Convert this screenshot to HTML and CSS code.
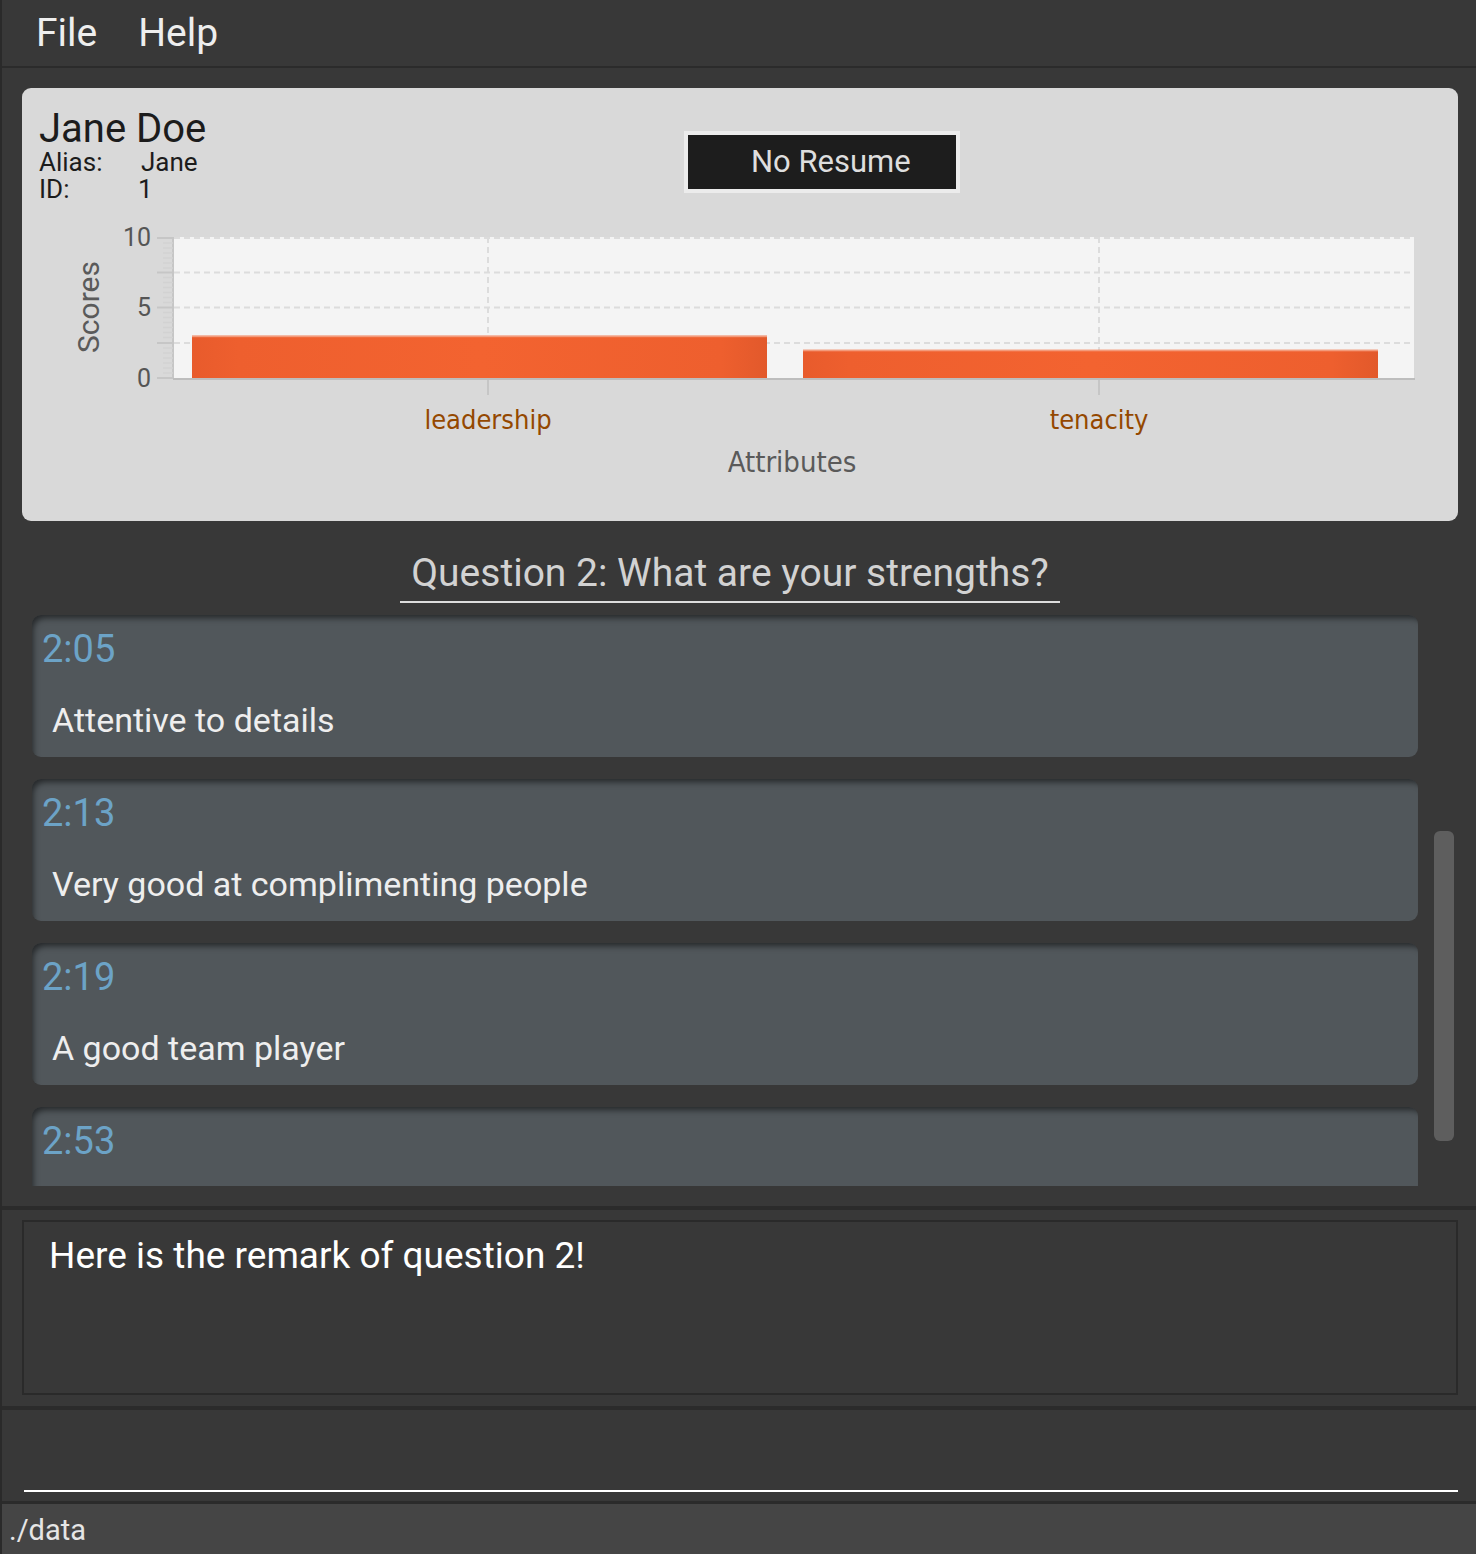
FILE: index.html
```html
<!DOCTYPE html>
<html>
<head>
<meta charset="utf-8">
<link rel="stylesheet" href="styles.css">
</head>
<body>
<div class="app">
  <div class="menubar"><span class="menu">File</span><span class="menu">Help</span></div>
  <div class="content">
    <section class="card">
      <div class="card-head">
        <div class="identity">
          <div class="name">Jane Doe</div>
          <div class="field"><span class="key">Alias:</span><span class="val">Jane</span></div>
          <div class="field"><span class="key">ID:</span><span class="val id">1</span></div>
        </div>
        <div class="resume">No Resume</div>
      </div>
      <svg class="chart" width="1436" height="311" viewBox="0 0 1436 311">
        <defs>
          <linearGradient id="bar" x1="0" x2="1" y1="0" y2="0">
            <stop offset="0" stop-color="#e85b2c"/>
            <stop offset="0.08" stop-color="#ee5f2e"/>
            <stop offset="0.5" stop-color="#f36330"/>
            <stop offset="0.92" stop-color="#ee5f2e"/>
            <stop offset="1" stop-color="#e2592b"/>
          </linearGradient>
        </defs>
        <rect x="152" y="27" width="1240" height="141" fill="#f4f4f4"/>
        <g stroke="#dcdcdc" stroke-width="2" stroke-dasharray="6 4" fill="none">
          <line x1="152" y1="28" x2="1392" y2="28"/>
          <line x1="152" y1="62.5" x2="1392" y2="62.5"/>
          <line x1="152" y1="97.5" x2="1392" y2="97.5"/>
          <line x1="152" y1="133" x2="1392" y2="133"/>
          <line x1="466" y1="27" x2="466" y2="168"/>
          <line x1="1077" y1="27" x2="1077" y2="168"/>
        </g>
        <rect x="170" y="125.7" width="575" height="42.3" fill="url(#bar)"/>
        <rect x="170" y="125.7" width="575" height="1.5" fill="#f39a7a"/>
        <rect x="781" y="139.8" width="575" height="28.2" fill="url(#bar)"/>
        <rect x="781" y="139.8" width="575" height="1.5" fill="#f39a7a"/>
        <g stroke="#c6c6c6" stroke-width="2" fill="none">
          <line x1="151" y1="27" x2="151" y2="169"/>
          <line x1="135" y1="28" x2="151" y2="28"/>
          <line x1="135" y1="62.5" x2="151" y2="62.5"/>
          <line x1="135" y1="97.5" x2="151" y2="97.5"/>
          <line x1="135" y1="133" x2="151" y2="133"/>
          <line x1="135" y1="168" x2="151" y2="168"/>
          <line x1="466" y1="169" x2="466" y2="185"/>
          <line x1="1077" y1="169" x2="1077" y2="185"/>
        </g>
        <g stroke="#d2d2d2" stroke-width="1.5" fill="none">
          <line x1="141" y1="33" x2="151" y2="33"/>
          <line x1="141" y1="38" x2="151" y2="38"/>
          <line x1="141" y1="43" x2="151" y2="43"/>
          <line x1="141" y1="48" x2="151" y2="48"/>
          <line x1="141" y1="53" x2="151" y2="53"/>
          <line x1="141" y1="58" x2="151" y2="58"/>
          <line x1="141" y1="67.5" x2="151" y2="67.5"/>
          <line x1="141" y1="72.5" x2="151" y2="72.5"/>
          <line x1="141" y1="77.5" x2="151" y2="77.5"/>
          <line x1="141" y1="82.5" x2="151" y2="82.5"/>
          <line x1="141" y1="87.5" x2="151" y2="87.5"/>
          <line x1="141" y1="92.5" x2="151" y2="92.5"/>
          <line x1="141" y1="102.5" x2="151" y2="102.5"/>
          <line x1="141" y1="107.5" x2="151" y2="107.5"/>
          <line x1="141" y1="112.5" x2="151" y2="112.5"/>
          <line x1="141" y1="117.5" x2="151" y2="117.5"/>
          <line x1="141" y1="122.5" x2="151" y2="122.5"/>
          <line x1="141" y1="127.5" x2="151" y2="127.5"/>
          <line x1="141" y1="138" x2="151" y2="138"/>
          <line x1="141" y1="143" x2="151" y2="143"/>
          <line x1="141" y1="148" x2="151" y2="148"/>
          <line x1="141" y1="153" x2="151" y2="153"/>
          <line x1="141" y1="158" x2="151" y2="158"/>
          <line x1="141" y1="163" x2="151" y2="163"/>
        </g>
        <line x1="151" y1="169" x2="1393" y2="169" stroke="#bdbdbd" stroke-width="2"/>
        <g class="tick-label" text-anchor="end">
          <text x="129" y="36">10</text>
          <text x="129" y="106">5</text>
          <text x="129" y="177">0</text>
        </g>
        <g class="cat-label" text-anchor="middle">
          <text x="466" y="219">leadership</text>
          <text x="1077" y="219">tenacity</text>
        </g>
        <text class="axis-title" x="770" y="262" text-anchor="middle">Attributes</text>
        <text class="axis-title scores" x="0" y="0" text-anchor="middle" transform="translate(77 97) rotate(-90)">Scores</text>
      </svg>
    </section>

    <div class="question"><span class="qtext">Question 2: What are your strengths?</span></div>

    <div class="list-wrap">
      <div class="list">
        <div class="item"><div class="time">2:05</div><div class="desc">Attentive to details</div></div>
        <div class="item"><div class="time">2:13</div><div class="desc">Very good at complimenting people</div></div>
        <div class="item"><div class="time">2:19</div><div class="desc">A good team player</div></div>
        <div class="item"><div class="time">2:53</div><div class="desc">&nbsp;</div></div>
      </div>
      <div class="scroll"><div class="thumb"></div></div>
    </div>
  </div>

  <div class="remark-pane"><div class="remark">Here is the remark of question 2!</div></div>
  <div class="command-pane"><div class="command-line"></div></div>
  <div class="status">./data</div>
</div>
</body>
</html>
```

FILE: styles.css
```css
* { box-sizing: border-box; }
html, body { margin: 0; padding: 0; }
body {
  background: #383838;
  font-family: Roboto, "Liberation Sans", sans-serif;
  width: 1476px;
  height: 1554px;
  overflow: hidden;
}
.app {
  width: 1476px;
  height: 1554px;
  border-left: 2px solid #2a2a2a;
  display: flex;
  flex-direction: column;
  background: #383838;
}
.menubar {
  height: 68px;
  border-bottom: 2px solid #2b2b2b;
  display: flex;
  padding-left: 34px;
  gap: 41px;
  line-height: 66px;
}
.menu {
  font-size: 39px;
  color: #eeeeee;
}
.content {
  padding: 20px 18px 20px 20px;
}
.card {
  height: 433px;
  background: #d9d9d9;
  border-radius: 9px;
  display: flex;
  flex-direction: column;
}
.card-head {
  height: 122px;
  display: flex;
  padding: 21px 0 0 17px;
}
.identity {
  width: 645px;
  color: #1c1c1c;
}
.name {
  font-size: 40px;
  line-height: 40px;
}
.field {
  display: flex;
  font-size: 26px;
  line-height: 27px;
}
.key { width: 102px; }
.val.id { margin-left: -3px; }
.resume {
  margin-top: 22px;
  width: 276px;
  height: 62px;
  border: 4px solid #ececec;
  background: #1d1d1d;
  color: #dedede;
  font-size: 31px;
  line-height: 54px;
  padding-left: 63px;
}
.chart { display: block; }
.tick-label text {
  font-family: Roboto, sans-serif;
  font-size: 25px;
  fill: #555555;
}
.cat-label text {
  font-family: "DejaVu Sans Condensed", "DejaVu Sans", sans-serif;
  font-size: 27px;
  fill: #944800;
}
.axis-title {
  font-family: "DejaVu Sans Condensed", "DejaVu Sans", sans-serif;
  font-size: 29px;
  fill: #5a5a5a;
}
.axis-title.scores {
  font-family: Roboto, sans-serif;
  font-size: 30px;
}
.question {
  display: flex;
  justify-content: center;
  padding-right: 20px;
  padding-top: 30px;
}
.qtext {
  font-size: 39px;
  line-height: 44px;
  color: #d2d2d2;
  padding: 0 11px 6px;
  border-bottom: 2px solid #dddddd;
}
.list-wrap {
  margin-top: 12px;
  height: 571px;
  display: flex;
  overflow: hidden;
}
.list {
  width: 1396px;
  padding-left: 10px;
  display: flex;
  flex-direction: column;
  gap: 22px;
}
.item {
  flex: 0 0 142px;
  background: #51575b;
  border-radius: 9px;
  box-shadow: inset 4px 6px 6px -3px rgba(0, 0, 0, 0.55);
  padding: 12px 0 0 10px;
}
.time {
  font-size: 38px;
  line-height: 44px;
  color: #6ca3c7;
}
.desc {
  margin-top: 29px;
  padding-left: 10px;
  font-size: 34px;
  line-height: 40px;
  color: #eeeeee;
}
.scroll {
  padding-left: 16px;
  padding-top: 216px;
}
.thumb {
  width: 20px;
  height: 310px;
  background: #5e5e5e;
  border-radius: 6px;
}
.remark-pane {
  border-top: 4px solid #2b2b2b;
  padding: 10px 18px 11px 20px;
}
.remark {
  height: 175px;
  border: 2px solid #2a2a2a;
  padding: 13px 0 0 25px;
  font-size: 37px;
  line-height: 42px;
  color: #ffffff;
}
.command-pane {
  border-top: 4px solid #2b2b2b;
  padding: 80px 18px 9px 22px;
}
.command-line {
  height: 2px;
  background: #ffffff;
}
.status {
  flex: 1;
  border-top: 3px solid #2b2b2b;
  background: #454545;
  color: #e6e6e6;
  font-size: 29px;
  line-height: 44px;
  padding: 4px 0 0 7px;
}
```
